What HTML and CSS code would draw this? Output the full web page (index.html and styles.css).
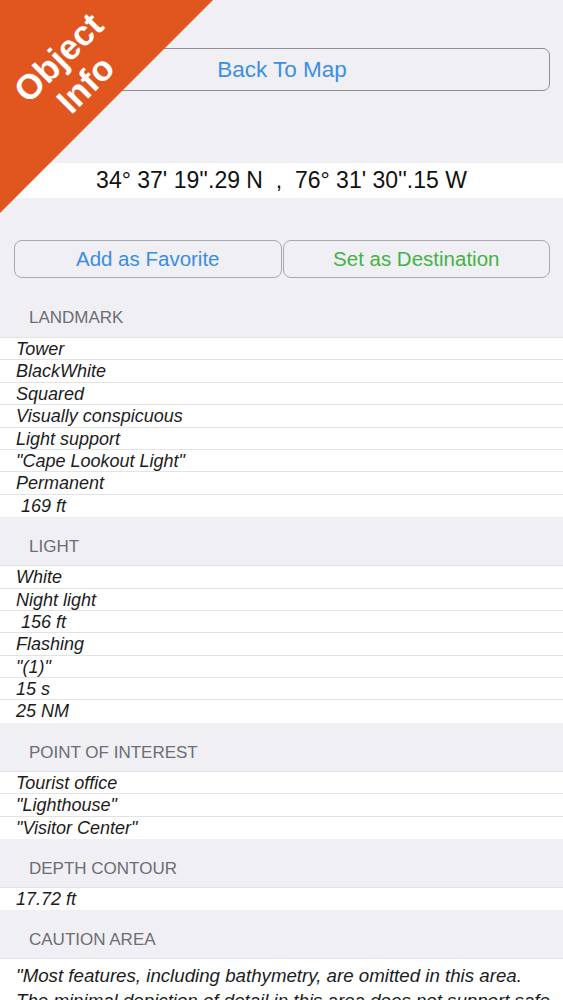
FILE: index.html
```html
<!DOCTYPE html>
<html>
<head>
<meta charset="utf-8">
<link rel="stylesheet" href="styles.css">
</head>
<body>
<div class="page">
  <div class="top">
    <button class="btn btn-map">Back To Map</button>
  </div>
  <div class="coords">34° 37' 19''.29 N&nbsp;&nbsp;,&nbsp;&nbsp;76° 31' 30''.15 W</div>
  <div class="actions">
    <button class="btn btn-half btn-fav">Add as Favorite</button>
    <button class="btn btn-half btn-dest">Set as Destination</button>
  </div>

  <div class="section first">
    <div class="sec-head">LANDMARK</div>
    <div class="rows">
      <div class="row">Tower</div>
      <div class="row">BlackWhite</div>
      <div class="row">Squared</div>
      <div class="row">Visually conspicuous</div>
      <div class="row">Light support</div>
      <div class="row">"Cape Lookout Light"</div>
      <div class="row">Permanent</div>
      <div class="row"> 169 ft</div>
    </div>
  </div>

  <div class="section">
    <div class="sec-head">LIGHT</div>
    <div class="rows">
      <div class="row">White</div>
      <div class="row">Night light</div>
      <div class="row"> 156 ft</div>
      <div class="row">Flashing</div>
      <div class="row">"(1)"</div>
      <div class="row">15 s</div>
      <div class="row">25 NM</div>
    </div>
  </div>

  <div class="section">
    <div class="sec-head">POINT OF INTEREST</div>
    <div class="rows">
      <div class="row">Tourist office</div>
      <div class="row">"Lighthouse"</div>
      <div class="row">"Visitor Center"</div>
    </div>
  </div>

  <div class="section">
    <div class="sec-head">DEPTH CONTOUR</div>
    <div class="rows">
      <div class="row">17.72 ft</div>
    </div>
  </div>

  <div class="section">
    <div class="sec-head">CAUTION AREA</div>
    <div class="rows">
      <div class="para">"Most features, including bathymetry, are omitted in this area.<br>The minimal depiction of detail in this area does not support safe navigation."</div>
    </div>
  </div>
</div>

<div class="ribbon">
  <svg class="ribbon-bg" width="214" height="214" viewBox="0 0 214 214"><polygon points="0,0 213,0 0,213" fill="#e1561f"/></svg>
  <div class="ribbon-text">Object<br>Info</div>
</div>
</body>
</html>
```

FILE: styles.css
```css
* { box-sizing: border-box; }
html, body {
  margin: 0;
  padding: 0;
  background: #efeff4;
  font-family: "Liberation Sans", Arial, sans-serif;
  overflow: hidden;
}
.page {
  width: 563px;
}
.top {
  padding: 48px 13px 0 14px;
}
.btn {
  font-family: "Liberation Sans", Arial, sans-serif;
  background: transparent;
  cursor: pointer;
  padding: 0;
  margin: 0;
}
.btn-map {
  display: block;
  width: 100%;
  height: 43px;
  border: 1.5px solid #8e8e92;
  border-radius: 7px;
  color: #3d8fe4;
  font-size: 22.5px;
}
.coords {
  margin-top: 72px;
  height: 35px;
  background: #ffffff;
  text-align: center;
  font-size: 23px;
  line-height: 35px;
  color: #111;
}
.actions {
  margin-top: 42px;
  padding: 0 13px 0 14px;
  display: flex;
  gap: 1px;
}
.btn-half {
  flex: 1;
  height: 38px;
  border: 1px solid #a9a9ad;
  border-radius: 8px;
  font-size: 20.5px;
}
.btn-fav { color: #3a8ee2; }
.btn-dest { color: #45b244; }
.section .sec-head {
  height: 49px;
  padding: 19px 0 0 29px;
  font-size: 17px;
  line-height: 22px;
  color: #6d6d72;
  border-bottom: 1px solid #e2e2e6;
}
.section.first .sec-head {
  height: 60px;
  padding-top: 29px;
}
.rows {
  background: #ffffff;
}
.row {
  height: 22.4px;
  line-height: 22px;
  padding-left: 16px;
  font-size: 18px;
  font-style: italic;
  color: #1c1c1c;
  white-space: pre;
  border-bottom: 1px solid #e3e3e6;
}
.row:last-child {
  border-bottom: none;
}
.para {
  padding: 4px 8px 0 16px;
  font-size: 18.7px;
  font-style: italic;
  line-height: 25px;
  color: #1c1c1c;
  height: 60px;
  overflow: hidden;
}
.ribbon {
  position: absolute;
  left: 0;
  top: 0;
  width: 214px;
  height: 214px;
}
.ribbon-bg {
  display: block;
}
.ribbon-text {
  position: absolute;
  left: 72px;
  top: 71px;
  width: 200px;
  margin-left: -100px;
  margin-top: -38px;
  text-align: center;
  color: #ffffff;
  font-weight: bold;
  font-size: 35px;
  line-height: 38px;
  transform: rotate(-45deg);
}
```
